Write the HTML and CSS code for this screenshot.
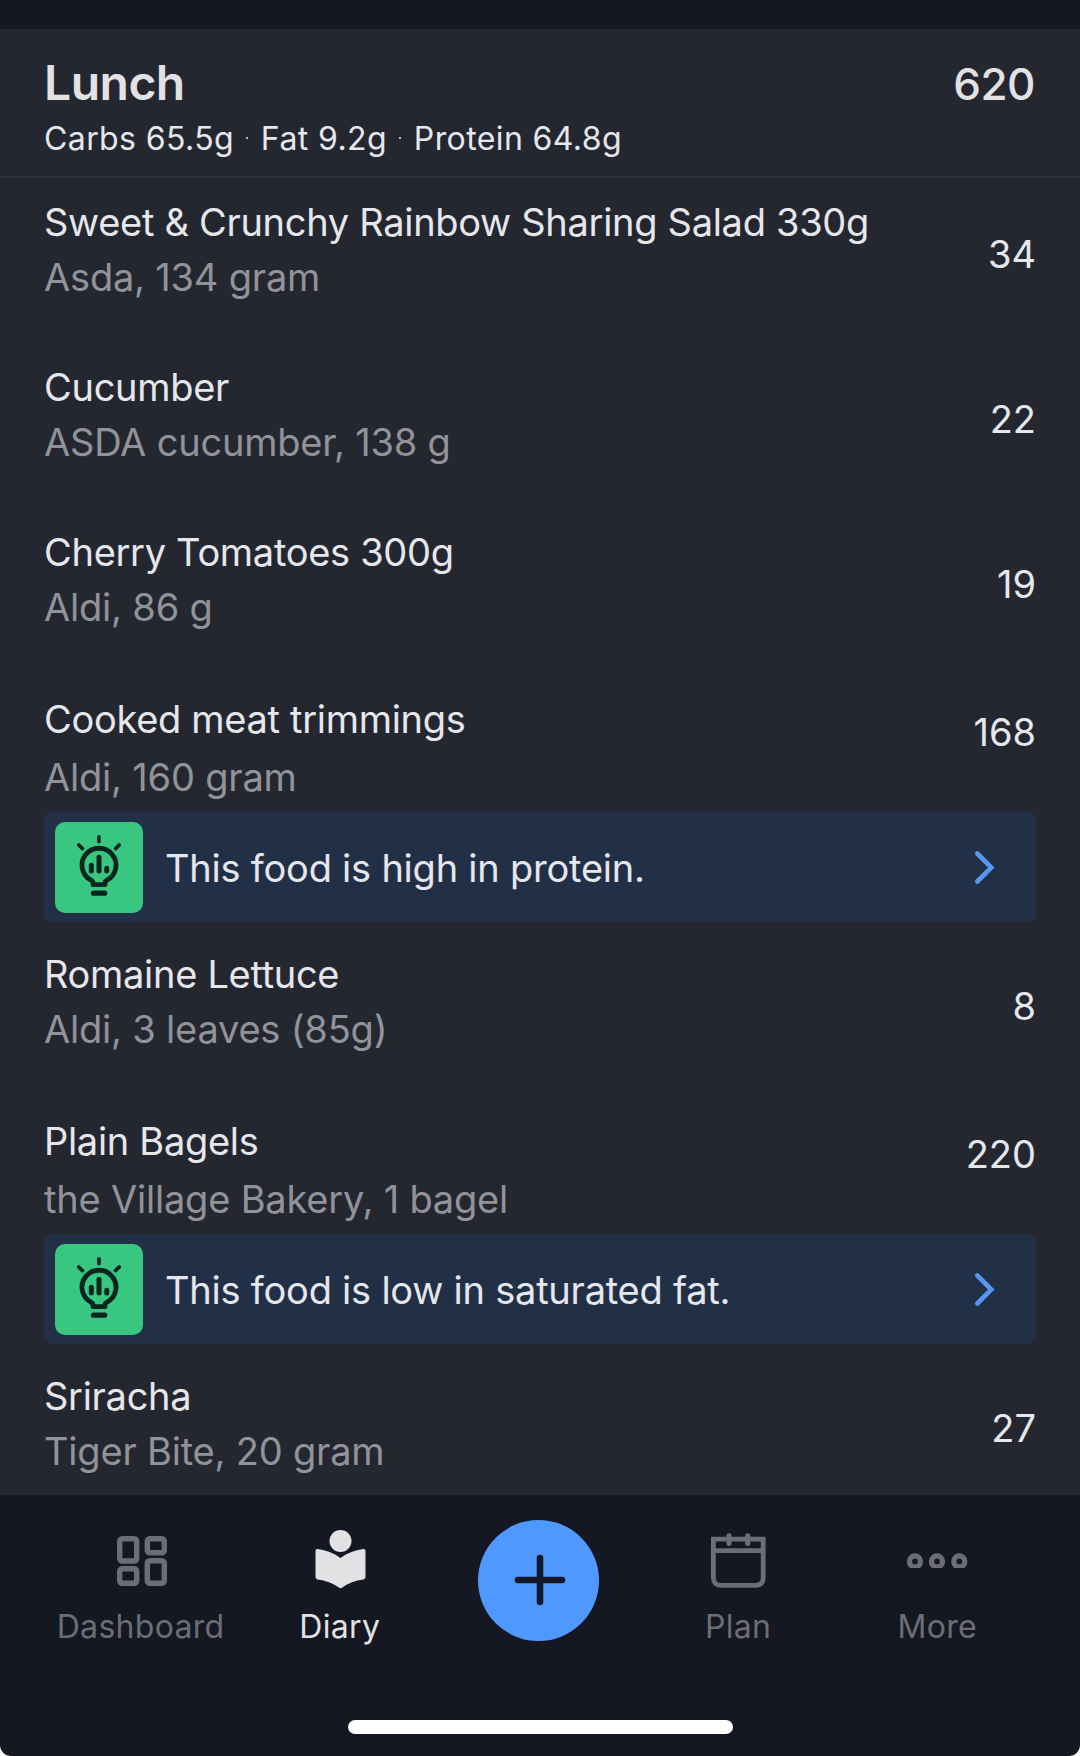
FILE: index.html
```html
<!DOCTYPE html>
<html lang="en">
<head>
<meta charset="utf-8">
<title>Food diary</title>
<link rel="stylesheet" href="styles.css">
</head>
<body>
<svg class="sprite" width="0" height="0" aria-hidden="true">
  <symbol id="insight" viewBox="0 0 88 91">
    <g fill="none" stroke="currentColor" stroke-linecap="round" stroke-linejoin="round">
      <path stroke-width="3.6" d="M44 14.800v4.900M23.800 23l3.700 3.600M64.200 23l-3.700 3.600"/>
      <path stroke-width="4.800" d="M38 62.700v-2.200c0-1-.8-1.600-1.700-2.100a17 17 0 1 1 15.400 0c-.9.5-1.700 1.100-1.700 2.100v2.200z"/>
      <path stroke-width="5" d="M36.300 43.300v5.600M44 35.300v13.600M51.700 46.300v2.600"/>
      <path stroke-width="5.200" d="M38.500 71.200h11.200"/>
    </g>
  </symbol>
  <symbol id="chevron" viewBox="0 0 24 36">
    <path fill="none" stroke="currentColor" stroke-width="4.600" stroke-linecap="round" d="M4.300 4.500l14 14-14 14"/>
  </symbol>
</svg>
<main class="screen">
  <section class="meal">
    <header class="meal-head">
      <div class="meal-top"><h1>Lunch</h1><span class="total">620</span></div>
      <p class="macros">Carbs 65.5g <i></i> Fat 9.2g <i></i> Protein 64.8g</p>
    </header>
    <ul class="foods">
      <li class="food">
        <div class="line"><div class="text"><p class="name">Sweet &amp; Crunchy Rainbow Sharing Salad 330g</p><p class="detail">Asda, 134 gram</p></div><span class="cal">34</span></div>
      </li>
      <li class="food">
        <div class="line"><div class="text"><p class="name">Cucumber</p><p class="detail">ASDA cucumber, 138 g</p></div><span class="cal">22</span></div>
      </li>
      <li class="food">
        <div class="line"><div class="text"><p class="name">Cherry Tomatoes 300g</p><p class="detail">Aldi, 86 g</p></div><span class="cal">19</span></div>
      </li>
      <li class="food tipped">
        <div class="line"><div class="text"><p class="name">Cooked meat trimmings</p><p class="detail">Aldi, 160 gram</p></div><span class="cal">168</span></div>
        <div class="tip"><span class="badge"><svg><use href="#insight"/></svg></span><p>This food is high in protein.</p><svg class="chev"><use href="#chevron"/></svg></div>
      </li>
      <li class="food">
        <div class="line"><div class="text"><p class="name">Romaine Lettuce</p><p class="detail">Aldi, 3 leaves (85g)</p></div><span class="cal">8</span></div>
      </li>
      <li class="food tipped">
        <div class="line"><div class="text"><p class="name">Plain Bagels</p><p class="detail">the Village Bakery, 1 bagel</p></div><span class="cal">220</span></div>
        <div class="tip"><span class="badge"><svg><use href="#insight"/></svg></span><p>This food is low in saturated fat.</p><svg class="chev"><use href="#chevron"/></svg></div>
      </li>
      <li class="food">
        <div class="line"><div class="text"><p class="name">Sriracha</p><p class="detail">Tiger Bite, 20 gram</p></div><span class="cal">27</span></div>
      </li>
    </ul>
  </section>
  <footer class="bottom">
    <nav class="tabs">
      <a class="tab">
        <svg viewBox="0 0 60 60" fill="none" stroke="currentColor" stroke-width="5.400"><rect x="8.700" y="8.700" width="17" height="22.300" rx="2.500"/><rect x="36.300" y="8.700" width="17" height="14" rx="2.500"/><rect x="8.700" y="38.700" width="17" height="14.600" rx="2.500"/><rect x="36.300" y="30.700" width="17" height="22.600" rx="2.500"/></svg>
        <span>Dashboard</span>
      </a>
      <a class="tab active">
        <svg viewBox="0 0 60 60" fill="currentColor"><circle cx="30.500" cy="11" r="11"/><path d="M5.500 21.300c0-1.500.8-2.400 2.300-2.200C16 20.200 23.500 23 30.500 28c7-5 14.500-7.800 22.700-8.900 1.500-.2 2.300.7 2.300 2.200v25.500c0 1.500-.7 2.400-2.100 2.600-8.200 1-15 3.500-21.200 8.100q-1.700 1.500-3.400 0c-6.200-4.600-13-7.100-21.200-8.100-1.400-.2-2.100-1.100-2.100-2.600z"/></svg>
        <span>Diary</span>
      </a>
      <a class="add" aria-label="Add"><svg viewBox="0 0 52 52" fill="none" stroke="currentColor" stroke-width="6.600" stroke-linecap="round"><path d="M26 4v44M4 26h44"/></svg></a>
      <a class="tab">
        <svg viewBox="0 0 60 60" fill="none" stroke="currentColor" stroke-width="4.800"><path d="M5.400 9.200h49.800v38.400q0 7.700-7.700 7.700H13.100q-7.700 0-7.700-7.700zM5.400 20.700h49.800"/><path stroke-linecap="round" stroke-width="5.200" d="M21 5.800v7.500M39.700 5.800v7.500"/></svg>
        <span>Plan</span>
      </a>
      <a class="tab">
        <svg viewBox="0 0 64 38" class="dots" fill="none" stroke="currentColor" stroke-width="5.300"><circle cx="10" cy="31.400" r="5.500"/><circle cx="32" cy="31.400" r="5.500"/><circle cx="54.300" cy="31.400" r="5.500"/></svg>
        <span>More</span>
      </a>
    </nav>
    <div class="home"></div>
  </footer>
</main>
</body>
</html>
```
FILE: styles.css
```css
* { box-sizing: border-box; margin: 0; padding: 0; }
body { background: #fff; font-family: Inter, "Liberation Sans", sans-serif; color: #e6e7ec; }
.sprite { display: block; width: 0; height: 0; }
.screen { width: 1080px; height: 1756px; display: flex; flex-direction: column; background: #151722; border-radius: 0 0 11px 11px; padding-top: 29px; overflow: hidden; white-space: nowrap; }
.meal { height: 1466px; background: #252730; overflow: hidden; }
.meal-head { height: 149px; padding: 23px 45px 0 44px; border-bottom: 2px solid #2e303a; }
.meal-top { display: flex; justify-content: space-between; height: 64px; }
h1 { font-size: 48px; line-height: 62px; font-weight: 600; letter-spacing: -0.5px; color: #e2e2e5; }
.total { font-size: 44px; line-height: 64px; font-weight: 500; letter-spacing: -0.5px; color: #e2e2e5; }
.macros { font-size: 32px; line-height: 46px; letter-spacing: 0.4px; }
.macros i { display: inline-block; width: 2px; height: 2px; margin: 0 3px; background: #b5b6bc; vertical-align: 11px; }
.foods { list-style: none; }
.food { height: 165px; padding: 17px 44px 0; }
.tipped { height: 257px; }
.line { display: flex; justify-content: space-between; }
.name, .detail, .cal { font-size: 38px; line-height: 55px; }
.name { letter-spacing: -0.3px; }
.detail { letter-spacing: -0.2px; color: #92939a; }
.cal { padding-top: 32px; }
.tipped .name, .tipped .detail { line-height: 58px; }
.tipped .cal { padding-top: 15px; }
.tip { display: flex; align-items: center; height: 110px; margin-top: 6px; padding: 0 39px 0 11px; background: #223047; border-radius: 8px; }
.tip p { flex: 1; margin-left: 22px; padding-top: 1px; font-size: 38px; line-height: 50px; letter-spacing: -0.23px; }
.badge { width: 88px; height: 91px; border-radius: 10px; background: #39c681; color: #08261f; }
.badge svg { display: block; width: 88px; height: 91px; }
.chev { width: 24px; height: 36px; color: #5597f2; }
.bottom { flex: 1; display: flex; flex-direction: column; align-items: center; }
.tabs { display: grid; grid-template-columns: repeat(5, 199.2px); width: 996px; height: 225px; margin-left: -2px; }
.tab { display: flex; flex-direction: column; align-items: center; padding-top: 35px; color: #6d6e75; }
.tab svg { width: auto; height: 60px; }
.tab .dots { height: 38px; margin-bottom: 22px; }
.tab span { margin-top: 17px; font-size: 32px; line-height: 40px; letter-spacing: 0.3px; }
.tab.active { color: #e2e2e4; }
.add { justify-self: center; display: flex; align-items: center; justify-content: center; width: 121px; height: 121px; margin-top: 25px; border-radius: 50%; background: #4f99fe; color: #131829; }
.add svg { width: 52px; height: 52px; margin: 0 0 1px 2px; }
.home { width: 385px; height: 14px; border-radius: 7px; background: #fff; }
```
